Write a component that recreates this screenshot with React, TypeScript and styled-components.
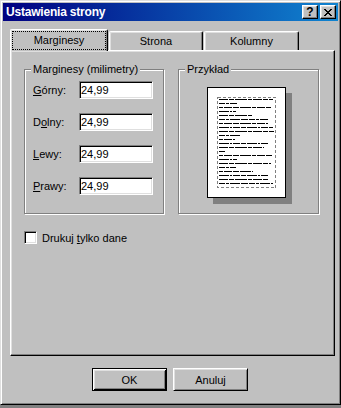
import { Fragment } from 'react';
import styled, { createGlobalStyle } from 'styled-components';

const GlobalStyle = createGlobalStyle`
  html, body {
    margin: 0;
    padding: 0;
  }
  body {
    background: #808080;
    font-family: "Liberation Sans", Arial, sans-serif;
    font-size: 11px;
    color: #000;
  }
`;

const Window = styled.div`
  box-sizing: border-box;
  width: 341px;
  height: 405px;
  padding: 2px;
  background: #c0c0c0;
  border: 1px solid;
  border-color: #dfdfdf #000 #000 #dfdfdf;
  box-shadow: inset 1px 1px 0 #fff, inset -1px -1px 0 #808080;
  display: flex;
  flex-direction: column;
`;

const TitleBar = styled.div`
  height: 18px;
  display: flex;
  align-items: center;
  padding: 0 2px 0 3px;
  background: linear-gradient(90deg, #000080, #1084d0);
`;

const Title = styled.span`
  flex: 1;
  color: #fff;
  font-weight: bold;
  font-size: 12px;
  letter-spacing: -0.2px;
`;

const TitleButton = styled.button<{ $gap?: boolean }>`
  box-sizing: border-box;
  width: 16px;
  height: 14px;
  padding: 0;
  margin-left: ${({ $gap }) => ($gap ? '2px' : '0')};
  background: #c0c0c0;
  border: 1px solid;
  border-color: #fff #000 #000 #fff;
  box-shadow: inset -1px -1px 0 #808080, inset 1px 1px 0 #dfdfdf;
  display: flex;
  align-items: center;
  justify-content: center;
  font: bold 12px "Liberation Sans", Arial, sans-serif;
  line-height: 12px;
  color: #000;
`;

const Body = styled.div`
  flex: 1;
  display: flex;
  flex-direction: column;
  padding: 8px 3px 0 7px;
`;

const TabStrip = styled.div`
  display: flex;
  align-items: flex-end;
  height: 21px;
`;

const Tab = styled.div<{ $active?: boolean; $width: number }>`
  box-sizing: border-box;
  position: relative;
  width: ${({ $width }) => $width}px;
  height: ${({ $active }) => ($active ? '22px' : '19px')};
  margin-left: ${({ $active }) => ($active ? '0' : '1px')};
  margin-bottom: ${({ $active }) => ($active ? '-1px' : '0')};
  z-index: ${({ $active }) => ($active ? 1 : 0)};
  background: #c0c0c0;
  border: 1px solid;
  border-bottom: none;
  border-color: #fff #000 #000 #fff;
  border-radius: 2px 2px 0 0;
  box-shadow: inset -1px 0 0 #808080, inset 1px 1px 0 #dfdfdf;
  display: flex;
  padding: ${({ $active }) => ($active ? '1px' : '0')};
`;

const TabLabel = styled.span<{ $focus?: boolean }>`
  flex: 1;
  display: flex;
  align-items: center;
  justify-content: center;
  border: 1px dotted ${({ $focus }) => ($focus ? '#000' : 'transparent')};
  padding-bottom: ${({ $focus }) => ($focus ? '2px' : '0')};
`;

const Panel = styled.div`
  box-sizing: border-box;
  width: 325px;
  height: 306px;
  border: 1px solid;
  border-color: #fff #000 #000 #fff;
  box-shadow: inset -1px -1px 0 #808080, inset 1px 1px 0 #dfdfdf;
  padding: 12px 0 0 13px;
  display: flex;
  flex-direction: column;
`;

const GroupRow = styled.div`
  display: flex;
  gap: 14px;
`;

const GroupBox = styled.fieldset<{ $width: number }>`
  box-sizing: border-box;
  width: ${({ $width }) => $width}px;
  height: 151px;
  margin: 0;
  padding: 0 8px;
  min-width: 0;
  border: 1px solid #808080;
  box-shadow: inset 1px 1px 0 #fff, 1px 1px 0 #fff;
`;

const Legend = styled.legend`
  padding: 0 2px;
  margin-left: -2px;
  line-height: 13px;
  background: #c0c0c0;
`;

const FieldGrid = styled.div`
  display: grid;
  grid-template-columns: 46px 74px;
  row-gap: 14px;
  align-items: center;
  padding-top: 5px;
`;

const FieldLabel = styled.label`
  white-space: nowrap;
`;

const Accel = styled.span`
  text-decoration: underline;
  text-underline-offset: 1px;
`;

const TextField = styled.input`
  box-sizing: border-box;
  width: 74px;
  height: 18px;
  margin: 0;
  padding: 0 0 0 1px;
  background: #fff;
  border: 1px solid;
  border-color: #808080 #fff #fff #808080;
  box-shadow: inset 1px 1px 0 #000, inset -1px -1px 0 #dfdfdf;
  font: 11px "Liberation Sans", Arial, sans-serif;
  color: #000;
  outline: none;
`;

const PreviewArea = styled.div`
  padding: 11px 0 0 20px;
`;

const Page = styled.div`
  box-sizing: border-box;
  width: 79px;
  height: 111px;
  background: #fff;
  border: 1px solid #000;
  box-shadow: 6px 6px 0 #808080;
  svg {
    display: block;
  }
`;

const CheckRow = styled.div`
  display: flex;
  align-items: center;
  gap: 5px;
  margin-top: 17px;
`;

const CheckBox = styled.span`
  box-sizing: border-box;
  width: 13px;
  height: 13px;
  background: #fff;
  border: 1px solid;
  border-color: #808080 #fff #fff #808080;
  box-shadow: inset 1px 1px 0 #000, inset -1px -1px 0 #dfdfdf;
`;

const ButtonRow = styled.div`
  display: flex;
  justify-content: center;
  gap: 6px;
  margin-top: 12px;
  padding-right: 5px;
`;

const Button = styled.button<{ $default?: boolean }>`
  box-sizing: border-box;
  width: 75px;
  height: 23px;
  padding: 0;
  background: #c0c0c0;
  border: 1px solid;
  border-color: ${({ $default }) => ($default ? '#000' : '#fff #000 #000 #fff')};
  box-shadow: ${({ $default }) =>
    $default
      ? 'inset 1px 1px 0 #fff, inset -1px -1px 0 #000, inset 2px 2px 0 #dfdfdf, inset -2px -2px 0 #808080'
      : 'inset 1px 1px 0 #dfdfdf, inset -1px -1px 0 #808080'};
  font: 11px "Liberation Sans", Arial, sans-serif;
  color: #000;
`;

// widths of the fake text lines in the page preview
const lineWidths = [54, 18, 52, 17, 34, 49, 49, 54, 55, 22, 16, 50, 45, 6, 54, 18, 52, 17, 34, 49, 49, 54];
const dashes = ['9 1 5 1 12 1 4 1', '6 1 3 1 10 1 7 1', '4 1 8 1 6 1 11 1', '10 1 2 1 7 1 5 1'];

const PagePreview = () => (
  <Page>
    <svg width="77" height="109" viewBox="0 0 77 109" shapeRendering="crispEdges">
      <rect x="9.5" y="9.5" width="58" height="90" fill="none" stroke="#808080" strokeDasharray="3 2" />
      {lineWidths.map((w, i) => (
        <line
          key={i}
          x1="11"
          x2={11 + w}
          y1={11.5 + i * 4}
          y2={11.5 + i * 4}
          stroke="#000"
          strokeWidth="1"
          strokeDasharray={dashes[i % dashes.length]}
        />
      ))}
    </svg>
  </Page>
);

const CloseGlyph = () => (
  <svg width="8" height="7" viewBox="0 0 8 7" shapeRendering="crispEdges">
    <path
      d="M0 0h2v1h1v1h2v-1h1v-1h2v1h-1v1h-1v1h-1v1h1v1h1v1h1v1h-2v-1h-1v-1h-2v1h-1v1h-2v-1h1v-1h1v-1h1v-1h-1v-1h-1v-1h-1z"
      fill="#000"
    />
  </svg>
);

const margins = [
  { pre: '', key: 'G', post: 'órny:' },
  { pre: 'D', key: 'o', post: 'lny:' },
  { pre: '', key: 'L', post: 'ewy:' },
  { pre: '', key: 'P', post: 'rawy:' },
];

export default function App() {
  return (
    <>
      <GlobalStyle />
      <Window>
        <TitleBar>
          <Title>Ustawienia strony</Title>
          <TitleButton>?</TitleButton>
          <TitleButton $gap>
            <CloseGlyph />
          </TitleButton>
        </TitleBar>
        <Body>
          <TabStrip>
            <Tab $active $width={98}>
              <TabLabel $focus>Marginesy</TabLabel>
            </Tab>
            <Tab $width={94}>
              <TabLabel>Strona</TabLabel>
            </Tab>
            <Tab $width={95}>
              <TabLabel>Kolumny</TabLabel>
            </Tab>
          </TabStrip>
          <Panel>
            <GroupRow>
              <GroupBox $width={140}>
                <Legend>Marginesy (milimetry)</Legend>
                <FieldGrid>
                  {margins.map(m => (
                    <Fragment key={m.pre + m.key}>
                      <FieldLabel>
                        {m.pre}
                        <Accel>{m.key}</Accel>
                        {m.post}
                      </FieldLabel>
                      <TextField defaultValue="24,99" />
                    </Fragment>
                  ))}
                </FieldGrid>
              </GroupBox>
              <GroupBox $width={141}>
                <Legend>Przykład</Legend>
                <PreviewArea>
                  <PagePreview />
                </PreviewArea>
              </GroupBox>
            </GroupRow>
            <CheckRow>
              <CheckBox />
              <span>
                Drukuj <Accel>t</Accel>ylko dane
              </span>
            </CheckRow>
          </Panel>
          <ButtonRow>
            <Button $default>OK</Button>
            <Button>Anuluj</Button>
          </ButtonRow>
        </Body>
      </Window>
    </>
  );
}
